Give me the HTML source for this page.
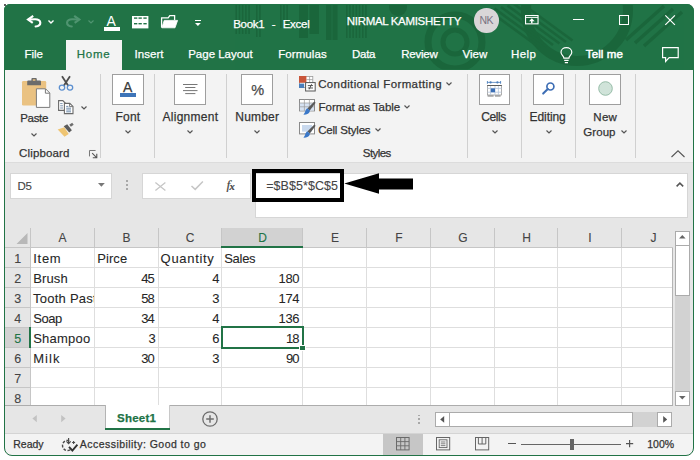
<!DOCTYPE html>
<html><head><meta charset="utf-8"><title>Book1 - Excel</title>
<style>
html,body{margin:0;padding:0;background:#fff;}
body{width:700px;height:460px;overflow:hidden;position:relative;font-family:"Liberation Sans",sans-serif;}
#win{position:absolute;left:4px;top:4px;width:690px;height:451.5px;border-radius:6px 7px 8px 8px;overflow:hidden;background:#e6e6e6;}
#win>*{margin-left:-4px;margin-top:-4px;}
#frame{position:absolute;left:4px;top:4px;width:690px;height:451.5px;box-sizing:border-box;border:1px solid #217346;border-radius:6px 7px 8px 8px;pointer-events:none;}
.t{position:absolute;white-space:nowrap;-webkit-text-stroke:0.25px currentColor;}
.b{position:absolute;}
svg{overflow:visible;}
</style></head><body>
<div id="win">
<div class="b" style="left:0px;top:0px;width:700px;height:69.5px;background:#217346;"></div>
<svg class="b" style="left:0;top:0" width="700" height="70" viewBox="0 0 700 70"><defs><clipPath id="tc"><rect x="0" y="4" width="700" height="65.5"/></clipPath></defs><g clip-path="url(#tc)" opacity="0.8"><rect x="299" y="4" width="9" height="34" fill="#1a6339"/><rect x="309.5" y="4" width="9.5" height="30" fill="#1a6339"/><rect x="326" y="4" width="5.5" height="36" fill="#1a6339"/><rect x="332.5" y="4" width="5" height="36" fill="#1a6339"/><rect x="235.5" y="4" width="1.5" height="30" fill="#1a6339"/><rect x="238.7" y="4" width="1.5" height="30" fill="#1a6339"/><rect x="241.9" y="4" width="1.5" height="30" fill="#1a6339"/><rect x="245.1" y="4" width="1.5" height="30" fill="#1a6339"/><rect x="248.3" y="4" width="1.5" height="30" fill="#1a6339"/><rect x="256.0" y="4" width="1.5" height="33" fill="#1a6339"/><rect x="259.2" y="4" width="1.5" height="33" fill="#1a6339"/><rect x="280.0" y="4" width="1.5" height="24" fill="#1a6339"/><rect x="283.2" y="4" width="1.5" height="24" fill="#1a6339"/><rect x="286.4" y="4" width="1.5" height="24" fill="#1a6339"/><rect x="346.0" y="4" width="1.5" height="34" fill="#1a6339"/><rect x="349.2" y="4" width="1.5" height="34" fill="#1a6339"/><rect x="352.4" y="4" width="1.5" height="34" fill="#1a6339"/><rect x="355.6" y="4" width="1.5" height="34" fill="#1a6339"/><rect x="358.8" y="4" width="1.5" height="34" fill="#1a6339"/><rect x="362.0" y="4" width="1.5" height="34" fill="#1a6339"/><rect x="365.2" y="4" width="1.5" height="34" fill="#1a6339"/><circle cx="398" cy="7" r="9" fill="#1a6339"/><circle cx="455" cy="42" r="27" fill="none" stroke="#1a6339" stroke-width="7"/><circle cx="455" cy="42" r="12" fill="none" stroke="#1a6339" stroke-width="5"/><circle cx="577" cy="10" r="51" fill="none" stroke="#1a6339" stroke-width="10"/><line x1="488.0" y1="10.0" x2="540.0" y2="48.0" stroke="#1a6339" stroke-width="2.6"/><line x1="494.5" y1="8.5" x2="546.5" y2="46.5" stroke="#1a6339" stroke-width="2.6"/><line x1="501.0" y1="7.0" x2="553.0" y2="45.0" stroke="#1a6339" stroke-width="2.6"/><line x1="507.5" y1="5.5" x2="559.5" y2="43.5" stroke="#1a6339" stroke-width="2.6"/><line x1="514.0" y1="4.0" x2="566.0" y2="42.0" stroke="#1a6339" stroke-width="2.6"/><line x1="520.5" y1="2.5" x2="572.5" y2="40.5" stroke="#1a6339" stroke-width="2.6"/><line x1="626" y1="40" x2="664" y2="6" stroke="#1a6339" stroke-width="3.4"/><line x1="635" y1="43" x2="673" y2="9" stroke="#1a6339" stroke-width="3.4"/><line x1="644" y1="46" x2="682" y2="12" stroke="#1a6339" stroke-width="3.4"/></g></svg>
<div class="b" style="left:66px;top:40px;width:55.5px;height:30px;background:#f3f3f3;"></div>
<svg class="b" style="left:26.8px;top:15px;" width="14.4" height="12.6" viewBox="0 0 16 14"><path d="M6.9 1.1 L1.2 5.1 L6.4 8.8" fill="none" stroke="#fff" stroke-width="2.4" stroke-linejoin="miter"/><path d="M2 5 L8.6 4.7 C12.4 4.5 14.8 6.4 14.8 8.6 C14.8 11 12.6 12.5 9.6 12.8" fill="none" stroke="#fff" stroke-width="2.4" stroke-linecap="round"/></svg>
<svg class="b" style="left:65.6px;top:15px;" width="14.4" height="12.6" viewBox="0 0 16 14"><g transform="translate(16,0) scale(-1,1)"><path d="M6.9 1.1 L1.2 5.1 L6.4 8.8" fill="none" stroke="#4f9470" stroke-width="2.4" stroke-linejoin="miter"/><path d="M2 5 L8.6 4.7 C12.4 4.5 14.8 6.4 14.8 8.6 C14.8 11 12.6 12.5 9.6 12.8" fill="none" stroke="#4f9470" stroke-width="2.4" stroke-linecap="round"/></g></svg>
<svg class="b" style="left:48px;top:20px;" width="6" height="4" viewBox="0 0 6 4"><path d="M0.5 0.5 L3 3 L5.5 0.5" fill="none" stroke="#fff" stroke-width="1.4"/></svg>
<svg class="b" style="left:87.5px;top:20px;" width="6" height="4" viewBox="0 0 6 4"><path d="M0.5 0.5 L3 3 L5.5 0.5" fill="none" stroke="#4f9470" stroke-width="1.2"/></svg>
<div class="t" style="left:106.60px;top:12px;font-size:14px;line-height:18px;color:#fff;-webkit-text-stroke:0;">A</div>
<div class="b" style="left:103.5px;top:27px;width:16.7px;height:3.6px;background:#fff;"></div>
<svg class="b" style="left:132.3px;top:16px;" width="17" height="13" viewBox="0 0 17 13"><rect x="0" y="0" width="16.4" height="12.4" fill="#fff"/><rect x="2" y="1.4000000000000001" width="3.3" height="1.4" fill="#217346"/><rect x="6.5" y="1.4000000000000001" width="3.3" height="1.4" fill="#217346"/><rect x="11.4" y="1.4000000000000001" width="3.3" height="1.4" fill="#217346"/><rect x="2" y="7.0" width="3.3" height="1.4" fill="#217346"/><rect x="6.5" y="7.0" width="3.3" height="1.4" fill="#217346"/><rect x="11.4" y="7.0" width="3.3" height="1.4" fill="#217346"/></svg>
<svg class="b" style="left:161.3px;top:15px;" width="17" height="13" viewBox="0 0 17 13"><path d="M0.6 12.6 V2.9 H7.2 L8.8 0.6 H13.6 V5" fill="none" stroke="#fff" stroke-width="1.3"/><path d="M0.8 12.8 L3.2 5.4 H16.6 L14 12.8 Z" fill="#fff" stroke="#fff" stroke-width="0.8" stroke-linejoin="round"/></svg>
<div class="b" style="left:195.4px;top:19.8px;width:5.8px;height:1.3px;background:#fff;"></div>
<svg class="b" style="left:195.4px;top:22.6px;" width="6" height="3.2" viewBox="0 0 6 3.2"><path d="M0 0 H5.8 L2.9 3.1 Z" fill="#fff"/></svg>
<div class="t" style="left:233.20px;top:17px;font-size:11.5px;line-height:14px;color:#fff;letter-spacing:-0.287px;word-spacing:4.50px;">Book1 - Excel</div>
<div class="t" style="left:346.80px;top:14px;font-size:11.5px;line-height:14px;color:#fff;letter-spacing:-0.325px;">NIRMAL KAMISHETTY</div>
<div class="b" style="left:474px;top:8px;width:24.5px;height:24.5px;background:#d9d6d8;border-radius:50%;"></div>
<div class="t" style="left:479.40px;top:13px;font-size:10.5px;line-height:14px;color:#7a7282;letter-spacing:-0.387px;-webkit-text-stroke:0;">NK</div>
<svg class="b" style="left:525.2px;top:15.4px;" width="13.6" height="9.4" viewBox="0 0 13.6 9.4"><rect x="0.55" y="0.55" width="12.5" height="8.3" fill="none" stroke="#fff" stroke-width="1.1"/><line x1="0.5" y1="2.5" x2="13" y2="2.5" stroke="#fff" stroke-width="0.9"/><path d="M6.8 3.3 L9.6 6.2 H4 Z" fill="#fff"/><path d="M6.8 5.5 V8.3" stroke="#fff" stroke-width="1.5"/></svg>
<div class="b" style="left:573px;top:19px;width:10.6px;height:1.2px;background:#fff;"></div>
<div class="b" style="left:619px;top:15px;width:10px;height:10px;border:1.2px solid #fff;box-sizing:border-box;"></div>
<svg class="b" style="left:665px;top:15px;" width="10" height="10" viewBox="0 0 10 10"><path d="M0.3 0.3 L9.9 9.9 M9.9 0.3 L0.3 9.9" stroke="#fff" stroke-width="1.2" fill="none"/></svg>
<div class="t" style="left:24.50px;top:47px;font-size:11.5px;line-height:14px;color:#fff;letter-spacing:-0.010px;">File</div>
<div class="t" style="left:76.70px;top:47px;font-size:11.5px;line-height:14px;color:#217346;letter-spacing:0.775px;">Home</div>
<div class="t" style="left:134.50px;top:47px;font-size:11.5px;line-height:14px;color:#fff;letter-spacing:0.048px;">Insert</div>
<div class="t" style="left:188.20px;top:47px;font-size:11.5px;line-height:14px;color:#fff;letter-spacing:-0.008px;">Page Layout</div>
<div class="t" style="left:278.20px;top:47px;font-size:11.5px;line-height:14px;color:#fff;letter-spacing:0.082px;">Formulas</div>
<div class="t" style="left:352.00px;top:47px;font-size:11.5px;line-height:14px;color:#fff;letter-spacing:-0.263px;">Data</div>
<div class="t" style="left:401.20px;top:47px;font-size:11.5px;line-height:14px;color:#fff;letter-spacing:-0.241px;">Review</div>
<div class="t" style="left:462.60px;top:47px;font-size:11.5px;line-height:14px;color:#fff;letter-spacing:-0.006px;">View</div>
<div class="t" style="left:511.00px;top:47px;font-size:11.5px;line-height:14px;color:#fff;letter-spacing:0.450px;">Help</div>
<div class="t" style="left:585.80px;top:47px;font-size:11.5px;line-height:14px;color:#fff;letter-spacing:0.096px;-webkit-text-stroke:0.5px #fff;">Tell me</div>
<svg class="b" style="left:559.5px;top:46.5px;" width="13" height="17" viewBox="0 0 13 17"><path d="M3.9 11.2 C3.9 9.2 1 8 1 5.2 C1 2.6 3.4 0.7 6.4 0.7 C9.4 0.7 11.8 2.6 11.8 5.2 C11.8 8 8.9 9.2 8.9 11.2 Z" fill="none" stroke="#fff" stroke-width="1.2"/><path d="M4.2 13.4 H8.6 M4.8 15.6 H8" stroke="#fff" stroke-width="1.2"/></svg>
<svg class="b" style="left:661.6px;top:46.5px;" width="17" height="15.5" viewBox="0 0 17 15.5"><path d="M0.6 0.6 H16.2 V10.6 H7.2 L3.6 14.4 V10.6 H0.6 Z" fill="none" stroke="#fff" stroke-width="1.2" stroke-linejoin="miter"/></svg>
<div class="b" style="left:0px;top:69.5px;width:700px;height:92px;background:#f3f3f3;"></div>
<div class="b" style="left:100.2px;top:74px;width:1px;height:83.5px;background:#d0d0d0;"></div>
<div class="b" style="left:153.8px;top:74px;width:1px;height:83.5px;background:#d0d0d0;"></div>
<div class="b" style="left:226.4px;top:74px;width:1px;height:83.5px;background:#d0d0d0;"></div>
<div class="b" style="left:287.4px;top:74px;width:1px;height:83.5px;background:#d0d0d0;"></div>
<div class="b" style="left:466.8px;top:74px;width:1px;height:83.5px;background:#d0d0d0;"></div>
<div class="b" style="left:521px;top:74px;width:1px;height:83.5px;background:#d0d0d0;"></div>
<div class="b" style="left:574.8px;top:74px;width:1px;height:83.5px;background:#d0d0d0;"></div>
<div class="b" style="left:635px;top:74px;width:1px;height:83.5px;background:#d0d0d0;"></div>
<svg class="b" style="left:21.8px;top:78px;" width="28.5" height="30" viewBox="0 0 28.5 30"><rect x="0" y="3" width="24.2" height="24.5" rx="1.2" fill="#eac282"/><path d="M5.2 7.2 V3.6 Q5.2 2.6 6.2 2.6 H9.4 V1 Q9.4 0 10.4 0 H13.8 Q14.8 0 14.8 1 V2.6 H18 Q19 2.6 19 3.6 V7.2 Z" fill="#6b6b6b"/><rect x="10.8" y="1.3" width="2.6" height="1.5" fill="#eac282"/><path d="M14.4 10.8 H23.6 L27.8 15 V29.4 H14.4 Z" fill="#fff" stroke="#7a7a7a" stroke-width="1"/><path d="M23.4 11 V15.2 H27.6" fill="none" stroke="#7a7a7a" stroke-width="1"/></svg>
<div class="t" style="left:20.30px;top:111px;font-size:11.5px;line-height:14px;color:#333;letter-spacing:-0.351px;">Paste</div>
<svg class="b" style="left:31.2px;top:132.6px;" width="6" height="4" viewBox="0 0 6 4"><path d="M0.5 0.5 L3 3 L5.5 0.5" fill="none" stroke="#555" stroke-width="1.2"/></svg>
<svg class="b" style="left:59px;top:76.3px;" width="14" height="14.6" viewBox="0 0 14 14.6"><path d="M3 0.2 L9.4 10 M11 0.2 L4.6 10" stroke="#4d4d4d" stroke-width="1.8" fill="none"/><ellipse cx="3" cy="11.6" rx="2.7" ry="2.5" fill="none" stroke="#5b8fd0" stroke-width="1.3"/><ellipse cx="11" cy="11.6" rx="2.7" ry="2.5" fill="none" stroke="#5b8fd0" stroke-width="1.3"/></svg>
<svg class="b" style="left:57.8px;top:100px;" width="15.4" height="14" viewBox="0 0 15.4 14"><path d="M0.6 0.6 H4.8 L7.2 3 V10.4 H0.6 Z" fill="#fff" stroke="#6a6a6a" stroke-width="1.1"/><path d="M2.2 3.6 H4.6 M2.2 5.8 H5 M2.2 8 H5" stroke="#6d87a6" stroke-width="0.9"/><path d="M6.4 3.4 H11.8 L15 6.4 V13.6 H6.4 Z" fill="#fff" stroke="#6a6a6a" stroke-width="1.1"/><path d="M11.6 3.6 V6.6 H14.8" fill="none" stroke="#6a6a6a" stroke-width="0.9"/><path d="M8.2 6.4 H10.4 M8.2 8.2 H13 M8.2 10 H13 M8.2 11.8 H13" stroke="#5f7fa3" stroke-width="0.9"/></svg>
<svg class="b" style="left:81px;top:105.5px;" width="6" height="4" viewBox="0 0 6 4"><path d="M0.5 0.5 L3 3 L5.5 0.5" fill="none" stroke="#555" stroke-width="1.2"/></svg>
<svg class="b" style="left:58.3px;top:122.8px;" width="16" height="14" viewBox="0 0 16 14"><path d="M-0.3 6.4 L6.3 4.2 L10.7 11 L6.5 13.8 Z" fill="#efc573"/><path d="M5.7 3.2 L9.2 1.2 L13.9 7.2 L11.2 9.4 Z" fill="#5c5c5c"/><path d="M11.2 1.7 L14.2 -0.3 L15.7 1.7 L12.9 3.7 Z" fill="#6e6e6e"/></svg>
<div class="t" style="left:19.00px;top:146px;font-size:11.5px;line-height:14px;color:#333;letter-spacing:0.160px;">Clipboard</div>
<svg class="b" style="left:88.6px;top:149.6px;" width="8.4" height="8.4" viewBox="0 0 8.4 8.4"><path d="M0.5 6.4 V0.5 H6.6" fill="none" stroke="#777" stroke-width="1"/><path d="M3.2 3.2 L7.6 7.6 M7.8 3.8 V7.8 H3.8" fill="none" stroke="#555" stroke-width="1.1"/></svg>
<div class="b" style="left:112px;top:74px;width:31.8px;height:30.6px;background:#fff;border:1px solid #9e9e9e;box-sizing:border-box;"></div>
<div class="t" style="left:115.60px;top:109px;font-size:12px;line-height:16px;color:#333;letter-spacing:0.197px;">Font</div>
<svg class="b" style="left:125.2px;top:130.4px;" width="6" height="4" viewBox="0 0 6 4"><path d="M0.5 0.5 L3 3 L5.5 0.5" fill="none" stroke="#555" stroke-width="1.2"/></svg>
<div class="t" style="left:123.00px;top:78px;font-size:14px;line-height:18px;color:#3a3a3a;">A</div>
<div class="b" style="left:120px;top:93px;width:16px;height:3.6px;background:#3d74b8;"></div>
<div class="b" style="left:174.2px;top:74px;width:31.8px;height:30.6px;background:#fff;border:1px solid #9e9e9e;box-sizing:border-box;"></div>
<div class="t" style="left:162.60px;top:109px;font-size:12px;line-height:16px;color:#333;letter-spacing:0.255px;">Alignment</div>
<svg class="b" style="left:187.4px;top:130.4px;" width="6" height="4" viewBox="0 0 6 4"><path d="M0.5 0.5 L3 3 L5.5 0.5" fill="none" stroke="#555" stroke-width="1.2"/></svg>
<svg class="b" style="left:183px;top:83.8px;" width="15" height="10.5" viewBox="0 0 15 10.5"><path d="M0 0.5 H14.5 M2.2 3.5 H12.4 M0 6.6 H14.5 M2.2 9.6 H12.4" stroke="#777" stroke-width="1" fill="none"/></svg>
<div class="b" style="left:241px;top:74px;width:31.8px;height:30.6px;background:#fff;border:1px solid #9e9e9e;box-sizing:border-box;"></div>
<div class="t" style="left:235.30px;top:109px;font-size:12px;line-height:16px;color:#333;letter-spacing:0.185px;">Number</div>
<svg class="b" style="left:254px;top:130.4px;" width="6" height="4" viewBox="0 0 6 4"><path d="M0.5 0.5 L3 3 L5.5 0.5" fill="none" stroke="#555" stroke-width="1.2"/></svg>
<div class="t" style="left:251.30px;top:81px;font-size:14.5px;line-height:18px;color:#4a4a4a;">%</div>
<div class="b" style="left:478.7px;top:74px;width:31.8px;height:30.6px;background:#fff;border:1px solid #9e9e9e;box-sizing:border-box;"></div>
<div class="t" style="left:481.30px;top:109px;font-size:12px;line-height:16px;color:#333;letter-spacing:-0.418px;">Cells</div>
<svg class="b" style="left:492.2px;top:130.4px;" width="6" height="4" viewBox="0 0 6 4"><path d="M0.5 0.5 L3 3 L5.5 0.5" fill="none" stroke="#555" stroke-width="1.2"/></svg>
<svg class="b" style="left:486.6px;top:80.8px;" width="15" height="17" viewBox="0 0 15 17"><path d="M0.4 1.4 H13.6" stroke="#4a7ebb" stroke-width="0.8" fill="none"/><path d="M0.4 0 V2.8 M13.6 0 V2.8" stroke="#4a7ebb" stroke-width="0.9" fill="none"/><circle cx="3.6" cy="1.4" r="1.1" fill="#4a7ebb"/><circle cx="10.4" cy="1.4" r="1.1" fill="#4a7ebb"/><rect x="0.5" y="4.6" width="14" height="9.4" fill="#fff" stroke="#9a9a9a" stroke-width="0.8"/><path d="M0.5 7.4 H14.5 M0.5 11.2 H14.5 M3.6 4.6 V14 M8 4.6 V14 M11.4 4.6 V14" stroke="#b4c4da" stroke-width="0.8"/><path d="M0.2 4.5 H14.8" stroke="#5a5a5a" stroke-width="1.2"/><rect x="3.8" y="7.4" width="4.2" height="3.8" fill="#3b6fb6"/><path d="M0.6 15 H6.6 M8 15 H13.6" stroke="#6a6a6a" stroke-width="0.9"/></svg>
<div class="b" style="left:532.5px;top:74px;width:31.8px;height:30.6px;background:#fff;border:1px solid #9e9e9e;box-sizing:border-box;"></div>
<div class="t" style="left:529.60px;top:109px;font-size:12px;line-height:16px;color:#333;letter-spacing:-0.082px;">Editing</div>
<svg class="b" style="left:545.6px;top:130.4px;" width="6" height="4" viewBox="0 0 6 4"><path d="M0.5 0.5 L3 3 L5.5 0.5" fill="none" stroke="#555" stroke-width="1.2"/></svg>
<svg class="b" style="left:541.5px;top:82px;" width="14" height="14" viewBox="0 0 14 14"><circle cx="8.4" cy="4.5" r="3.5" fill="none" stroke="#3f6fb5" stroke-width="1.7"/><path d="M5.8 7.1 L1.2 11.6" stroke="#3f6fb5" stroke-width="2.1" stroke-linecap="round"/></svg>
<div class="b" style="left:589.2px;top:74px;width:31.8px;height:30.6px;background:#fff;border:1px solid #9e9e9e;box-sizing:border-box;"></div>
<svg class="b" style="left:597.5px;top:81.2px;" width="15" height="15" viewBox="0 0 15 15"><circle cx="7.5" cy="7.5" r="6.8" fill="#d0e3d9" stroke="#96bda8" stroke-width="1"/></svg>
<div class="t" style="left:593.30px;top:110px;font-size:11.5px;line-height:14px;color:#333;letter-spacing:0.297px;">New</div>
<div class="t" style="left:583.30px;top:125px;font-size:11.5px;line-height:14px;color:#333;letter-spacing:0.060px;">Group</div>
<svg class="b" style="left:620.6px;top:130.4px;" width="6" height="4" viewBox="0 0 6 4"><path d="M0.5 0.5 L3 3 L5.5 0.5" fill="none" stroke="#555" stroke-width="1.2"/></svg>
<svg class="b" style="left:670.5px;top:150px;" width="14" height="8" viewBox="0 0 14 8"><path d="M0.5 7 L7 0.8 L13.5 7" fill="none" stroke="#555" stroke-width="1.1"/></svg>
<svg class="b" style="left:299px;top:76.2px;" width="16.8" height="15.6" viewBox="0 0 16.8 15.6"><rect x="0.4" y="0.4" width="13.4" height="11" fill="#fff" stroke="#9a9a9a" stroke-width="0.8"/><path d="M7.4 3.6 H13.8 M10.6 0.4 V7" stroke="#9a9a9a" stroke-width="0.7"/><rect x="0" y="0" width="7.4" height="6.8" fill="#c9553a"/><rect x="0" y="7.6" width="5.2" height="4.4" fill="#4a7ebb"/><rect x="6.6" y="6.6" width="9.6" height="8.4" fill="#fff" stroke="#555" stroke-width="1"/><path d="M8.8 9.6 H14 M8.8 12 H14 M12.6 8.2 L10.2 13.4" stroke="#444" stroke-width="0.9" fill="none"/></svg>
<svg class="b" style="left:299px;top:99px;" width="16.8" height="16" viewBox="0 0 16.8 16"><rect x="0.5" y="0.5" width="15" height="11.4" fill="#fff" stroke="#8a8a8a" stroke-width="1"/><rect x="0.9" y="4" width="14" height="7.6" fill="#d6e2f2"/><path d="M0.5 4 H15.5 M0.5 7.8 H15.5 M5.4 0.5 V11.9 M10.4 0.5 V11.9" stroke="#9a9a9a" stroke-width="0.7"/><path d="M15.4 2.4 L16.6 3.8 L10.8 11.6 L8.4 9.6 Z" fill="#5a5a5a"/><path d="M8.2 9.2 L11 11.6 C10.6 14.6 8 16.2 4.2 15.6 C6.4 14.2 6 10.8 8.2 9.2 Z" fill="#3b78c8"/></svg>
<svg class="b" style="left:299px;top:122px;" width="16.8" height="16" viewBox="0 0 16.8 16"><rect x="0.5" y="0.5" width="15" height="11.4" fill="#fff" stroke="#8a8a8a" stroke-width="1"/><rect x="3" y="3" width="10" height="6.6" fill="#c9d9ee"/><path d="M15.4 2.4 L16.6 3.8 L10.8 11.6 L8.4 9.6 Z" fill="#5a5a5a"/><path d="M8.2 9.2 L11 11.6 C10.6 14.6 8 16.2 4.2 15.6 C6.4 14.2 6 10.8 8.2 9.2 Z" fill="#3b78c8"/></svg>
<div class="t" style="left:318.20px;top:77px;font-size:11.5px;line-height:14px;color:#333;letter-spacing:0.367px;">Conditional Formatting</div>
<svg class="b" style="left:446px;top:82.4px;" width="6" height="4" viewBox="0 0 6 4"><path d="M0.5 0.5 L3 3 L5.5 0.5" fill="none" stroke="#555" stroke-width="1.2"/></svg>
<div class="t" style="left:318.60px;top:100px;font-size:11.5px;line-height:14px;color:#333;letter-spacing:-0.045px;">Format as Table</div>
<svg class="b" style="left:404px;top:105.4px;" width="6" height="4" viewBox="0 0 6 4"><path d="M0.5 0.5 L3 3 L5.5 0.5" fill="none" stroke="#555" stroke-width="1.2"/></svg>
<div class="t" style="left:318.20px;top:123px;font-size:11.5px;line-height:14px;color:#333;letter-spacing:-0.192px;">Cell Styles</div>
<svg class="b" style="left:375px;top:128.4px;" width="6" height="4" viewBox="0 0 6 4"><path d="M0.5 0.5 L3 3 L5.5 0.5" fill="none" stroke="#555" stroke-width="1.2"/></svg>
<div class="t" style="left:362.80px;top:146px;font-size:11.5px;line-height:14px;color:#333;letter-spacing:-0.583px;">Styles</div>
<div class="b" style="left:0px;top:161.5px;width:700px;height:272px;background:#e6e6e6;"></div>
<div class="b" style="left:0px;top:161.5px;width:700px;height:1px;background:#dcdcdc;"></div>
<div class="b" style="left:10px;top:172.5px;width:102px;height:26px;background:#fff;border:1px solid #d6d6d6;box-sizing:border-box;"></div>
<div class="t" style="left:17.40px;top:179px;font-size:11.5px;line-height:14px;color:#444;letter-spacing:-0.200px;-webkit-text-stroke:0.1px;">D5</div>
<svg class="b" style="left:97.5px;top:183px;" width="7" height="4" viewBox="0 0 7 4"><path d="M0 0 H6.8 L3.4 3.8 Z" fill="#777"/></svg>
<div class="b" style="left:126px;top:180.2px;width:1.6px;height:1.7px;background:#a8a8a8;"></div>
<div class="b" style="left:126px;top:184.2px;width:1.6px;height:1.7px;background:#a8a8a8;"></div>
<div class="b" style="left:126px;top:188.2px;width:1.6px;height:1.7px;background:#a8a8a8;"></div>
<div class="b" style="left:141.6px;top:172.5px;width:109.2px;height:26px;background:#fff;border:1px solid #d6d6d6;box-sizing:border-box;"></div>
<svg class="b" style="left:155px;top:181.5px;" width="10.8" height="8.8" viewBox="0 0 10.8 8.8"><path d="M0.4 0.4 L10.4 8.4 M10.4 0.4 L0.4 8.4" stroke="#c6c6c6" stroke-width="1.3" fill="none"/></svg>
<svg class="b" style="left:191px;top:181.4px;" width="12.4" height="9" viewBox="0 0 12.4 9"><path d="M0.5 5 L4.2 8.4 L11.9 0.5" stroke="#c6c6c6" stroke-width="1.5" fill="none"/></svg>
<div class="t" style="left:226.4px;top:177px;font-family:'Liberation Serif',serif;font-style:italic;font-size:13.5px;line-height:16px;color:#444;-webkit-text-stroke:0.2px #444;">f<span style="font-size:10.5px;font-weight:bold;position:relative;top:1.2px;left:-0.6px;letter-spacing:0;">x</span></div>
<div class="b" style="left:254.5px;top:172.5px;width:433.5px;height:45.5px;background:#fff;border:1px solid #d6d6d6;box-sizing:border-box;"></div>
<div class="t" style="left:266.20px;top:178px;font-size:12.5px;line-height:16px;color:#444;letter-spacing:0.062px;-webkit-text-stroke:0.1px;">=$B$5*$C$5</div>
<div class="b" style="left:252.3px;top:169.2px;width:91.4px;height:33px;border:4.3px solid #000;box-sizing:border-box;"></div>
<svg class="b" style="left:344px;top:172px;" width="70" height="24" viewBox="0 0 70 24"><path d="M0.3 11.4 L35 1.2 L35 6.6 L69 6.6 L69 17.4 L35 17.4 L35 21.8 Z" fill="#000"/></svg>
<svg class="b" style="left:675.8px;top:182.2px;" width="7.8" height="5" viewBox="0 0 7.8 5"><path d="M0.6 4.4 L3.9 1.1 L7.2 4.4" fill="none" stroke="#555" stroke-width="1.5"/></svg>
<div class="b" style="left:31px;top:248px;width:641.5px;height:157.5px;background:#fff;"></div>
<div class="b" style="left:222px;top:228px;width:80px;height:19px;background:#d2d2d2;"></div>
<div class="b" style="left:5px;top:328px;width:25px;height:19px;background:#d2d2d2;"></div>
<div class="b" style="left:30px;top:228px;width:1px;height:19.5px;background:#c6c6c6;"></div>
<div class="b" style="left:94px;top:228px;width:1px;height:19.5px;background:#c6c6c6;"></div>
<div class="b" style="left:158px;top:228px;width:1px;height:19.5px;background:#c6c6c6;"></div>
<div class="b" style="left:221px;top:228px;width:1px;height:19.5px;background:#c6c6c6;"></div>
<div class="b" style="left:302px;top:228px;width:1px;height:19.5px;background:#c6c6c6;"></div>
<div class="b" style="left:366px;top:228px;width:1px;height:19.5px;background:#c6c6c6;"></div>
<div class="b" style="left:430px;top:228px;width:1px;height:19.5px;background:#c6c6c6;"></div>
<div class="b" style="left:494px;top:228px;width:1px;height:19.5px;background:#c6c6c6;"></div>
<div class="b" style="left:557px;top:228px;width:1px;height:19.5px;background:#c6c6c6;"></div>
<div class="b" style="left:621px;top:228px;width:1px;height:19.5px;background:#c6c6c6;"></div>
<div class="b" style="left:5px;top:247px;width:667.5px;height:1px;background:#c6c6c6;"></div>
<div class="b" style="left:221px;top:246px;width:82px;height:2px;background:#217346;"></div>
<div class="b" style="left:5px;top:267.0px;width:25px;height:1px;background:#c6c6c6;"></div>
<div class="b" style="left:31px;top:267.0px;width:641px;height:1px;background:#dedede;"></div>
<div class="b" style="left:5px;top:287.0px;width:25px;height:1px;background:#c6c6c6;"></div>
<div class="b" style="left:31px;top:287.0px;width:641px;height:1px;background:#dedede;"></div>
<div class="b" style="left:5px;top:307.0px;width:25px;height:1px;background:#c6c6c6;"></div>
<div class="b" style="left:31px;top:307.0px;width:641px;height:1px;background:#dedede;"></div>
<div class="b" style="left:5px;top:327.0px;width:25px;height:1px;background:#c6c6c6;"></div>
<div class="b" style="left:31px;top:327.0px;width:641px;height:1px;background:#dedede;"></div>
<div class="b" style="left:5px;top:347.0px;width:25px;height:1px;background:#c6c6c6;"></div>
<div class="b" style="left:31px;top:347.0px;width:641px;height:1px;background:#dedede;"></div>
<div class="b" style="left:5px;top:367.0px;width:25px;height:1px;background:#c6c6c6;"></div>
<div class="b" style="left:31px;top:367.0px;width:641px;height:1px;background:#dedede;"></div>
<div class="b" style="left:5px;top:387.0px;width:25px;height:1px;background:#c6c6c6;"></div>
<div class="b" style="left:31px;top:387.0px;width:641px;height:1px;background:#dedede;"></div>
<div class="b" style="left:94px;top:248px;width:1px;height:157px;background:#dedede;"></div>
<div class="b" style="left:158px;top:248px;width:1px;height:157px;background:#dedede;"></div>
<div class="b" style="left:221px;top:248px;width:1px;height:157px;background:#dedede;"></div>
<div class="b" style="left:302px;top:248px;width:1px;height:157px;background:#dedede;"></div>
<div class="b" style="left:366px;top:248px;width:1px;height:157px;background:#dedede;"></div>
<div class="b" style="left:430px;top:248px;width:1px;height:157px;background:#dedede;"></div>
<div class="b" style="left:494px;top:248px;width:1px;height:157px;background:#dedede;"></div>
<div class="b" style="left:557px;top:248px;width:1px;height:157px;background:#dedede;"></div>
<div class="b" style="left:621px;top:248px;width:1px;height:157px;background:#dedede;"></div>
<div class="b" style="left:30px;top:248px;width:1px;height:157.5px;background:#c6c6c6;"></div>
<div class="b" style="left:29px;top:327px;width:2px;height:21px;background:#217346;"></div>
<div class="b" style="left:672px;top:248px;width:1px;height:158px;background:#b4b4b4;"></div>
<div class="b" style="left:5px;top:405px;width:668px;height:1px;background:#acacac;"></div>
<svg class="b" style="left:15.5px;top:233px;" width="12" height="11.5" viewBox="0 0 12 11.5"><path d="M11.5 0 V11 H0.5 Z" fill="#b8b8b8"/></svg>
<div class="t" style="left:58.50px;top:230px;font-size:12px;line-height:16px;color:#444;-webkit-text-stroke:0.1px;">A</div>
<div class="t" style="left:122.50px;top:230px;font-size:12px;line-height:16px;color:#444;-webkit-text-stroke:0.1px;">B</div>
<div class="t" style="left:185.87px;top:230px;font-size:12px;line-height:16px;color:#444;-webkit-text-stroke:0.1px;">C</div>
<div class="t" style="left:258.17px;top:230px;font-size:12px;line-height:16px;color:#217346;-webkit-text-stroke:0.1px;">D</div>
<div class="t" style="left:331.00px;top:230px;font-size:12px;line-height:16px;color:#444;-webkit-text-stroke:0.1px;">E</div>
<div class="t" style="left:395.34px;top:230px;font-size:12px;line-height:16px;color:#444;-webkit-text-stroke:0.1px;">F</div>
<div class="t" style="left:458.33px;top:230px;font-size:12px;line-height:16px;color:#444;-webkit-text-stroke:0.1px;">G</div>
<div class="t" style="left:522.17px;top:230px;font-size:12px;line-height:16px;color:#444;-webkit-text-stroke:0.1px;">H</div>
<div class="t" style="left:588.33px;top:230px;font-size:12px;line-height:16px;color:#444;-webkit-text-stroke:0.1px;">I</div>
<div class="t" style="left:650.50px;top:230px;font-size:12px;line-height:16px;color:#444;-webkit-text-stroke:0.1px;">J</div>
<div class="t" style="left:14.32px;top:251px;font-size:12.5px;line-height:16px;color:#444;-webkit-text-stroke:0.1px;">1</div>
<div class="t" style="left:14.32px;top:271px;font-size:12.5px;line-height:16px;color:#444;-webkit-text-stroke:0.1px;">2</div>
<div class="t" style="left:14.32px;top:291px;font-size:12.5px;line-height:16px;color:#444;-webkit-text-stroke:0.1px;">3</div>
<div class="t" style="left:14.32px;top:311px;font-size:12.5px;line-height:16px;color:#444;-webkit-text-stroke:0.1px;">4</div>
<div class="t" style="left:14.32px;top:331px;font-size:12.5px;line-height:16px;color:#217346;-webkit-text-stroke:0.1px;">5</div>
<div class="t" style="left:14.32px;top:351px;font-size:12.5px;line-height:16px;color:#444;-webkit-text-stroke:0.1px;">6</div>
<div class="t" style="left:14.32px;top:371px;font-size:12.5px;line-height:16px;color:#444;-webkit-text-stroke:0.1px;">7</div>
<div class="t" style="left:14.32px;top:391px;font-size:12.5px;line-height:16px;color:#444;-webkit-text-stroke:0.1px;">8</div>
<div class="t" style="left:33.20px;top:250px;font-size:13px;line-height:17px;color:#262626;letter-spacing:0.740px;-webkit-text-stroke:0.08px #262626;">Item</div>
<div class="t" style="left:97.20px;top:250px;font-size:13px;line-height:17px;color:#262626;letter-spacing:0.096px;-webkit-text-stroke:0.08px #262626;">Pirce</div>
<div class="t" style="left:160.60px;top:250px;font-size:13px;line-height:17px;color:#262626;letter-spacing:0.684px;-webkit-text-stroke:0.08px #262626;">Quantity</div>
<div class="t" style="left:224.20px;top:250px;font-size:13px;line-height:17px;color:#262626;letter-spacing:-0.280px;-webkit-text-stroke:0.08px #262626;">Sales</div>
<div class="t" style="left:33.20px;top:270px;font-size:13px;line-height:17px;color:#262626;letter-spacing:0.135px;-webkit-text-stroke:0.08px #262626;">Brush</div>
<div class="t" style="left:141.14px;top:270px;font-size:13px;line-height:17px;color:#262626;letter-spacing:-0.798px;-webkit-text-stroke:0.08px #262626;">45</div>
<div class="t" style="left:212.17px;top:270px;font-size:13px;line-height:17px;color:#262626;letter-spacing:-0.999px;-webkit-text-stroke:0.08px #262626;">4</div>
<div class="t" style="left:278.51px;top:270px;font-size:13px;line-height:17px;color:#262626;letter-spacing:-0.299px;-webkit-text-stroke:0.08px #262626;">180</div>
<div class="b" style="left:31px;top:288px;width:63px;height:19px;overflow:hidden;"><div class="t" style="left:2px;top:2.00px;font-size:13px;line-height:17px;color:#262626;letter-spacing:0.25px;-webkit-text-stroke:0.08px #262626;">Tooth Past</div></div>
<div class="t" style="left:141.14px;top:290px;font-size:13px;line-height:17px;color:#262626;letter-spacing:-0.798px;-webkit-text-stroke:0.08px #262626;">58</div>
<div class="t" style="left:212.17px;top:290px;font-size:13px;line-height:17px;color:#262626;letter-spacing:-0.999px;-webkit-text-stroke:0.08px #262626;">3</div>
<div class="t" style="left:278.51px;top:290px;font-size:13px;line-height:17px;color:#262626;letter-spacing:-0.299px;-webkit-text-stroke:0.08px #262626;">174</div>
<div class="t" style="left:33.20px;top:310px;font-size:13px;line-height:17px;color:#262626;letter-spacing:-0.453px;-webkit-text-stroke:0.08px #262626;">Soap</div>
<div class="t" style="left:141.14px;top:310px;font-size:13px;line-height:17px;color:#262626;letter-spacing:-0.798px;-webkit-text-stroke:0.08px #262626;">34</div>
<div class="t" style="left:212.17px;top:310px;font-size:13px;line-height:17px;color:#262626;letter-spacing:-0.999px;-webkit-text-stroke:0.08px #262626;">4</div>
<div class="t" style="left:278.51px;top:310px;font-size:13px;line-height:17px;color:#262626;letter-spacing:-0.299px;-webkit-text-stroke:0.08px #262626;">136</div>
<div class="t" style="left:33.20px;top:330px;font-size:13px;line-height:17px;color:#262626;letter-spacing:0.226px;-webkit-text-stroke:0.08px #262626;">Shampoo</div>
<div class="t" style="left:148.57px;top:330px;font-size:13px;line-height:17px;color:#262626;letter-spacing:-0.999px;-webkit-text-stroke:0.08px #262626;">3</div>
<div class="t" style="left:212.17px;top:330px;font-size:13px;line-height:17px;color:#262626;letter-spacing:-0.999px;-webkit-text-stroke:0.08px #262626;">6</div>
<div class="t" style="left:285.94px;top:330px;font-size:13px;line-height:17px;color:#262626;letter-spacing:-0.798px;-webkit-text-stroke:0.08px #262626;">18</div>
<div class="t" style="left:33.20px;top:350px;font-size:13px;line-height:17px;color:#262626;letter-spacing:1.098px;-webkit-text-stroke:0.08px #262626;">Milk</div>
<div class="t" style="left:141.14px;top:350px;font-size:13px;line-height:17px;color:#262626;letter-spacing:-0.798px;-webkit-text-stroke:0.08px #262626;">30</div>
<div class="t" style="left:212.17px;top:350px;font-size:13px;line-height:17px;color:#262626;letter-spacing:-0.999px;-webkit-text-stroke:0.08px #262626;">3</div>
<div class="t" style="left:285.94px;top:350px;font-size:13px;line-height:17px;color:#262626;letter-spacing:-0.798px;-webkit-text-stroke:0.08px #262626;">90</div>
<div class="b" style="left:220.8px;top:326.2px;width:83px;height:23.2px;border:2px solid #217346;box-sizing:border-box;"></div>
<div class="b" style="left:299.4px;top:344.6px;width:6.2px;height:6.2px;background:#217346;border:1px solid #fff;box-sizing:border-box;"></div>
<div class="b" style="left:675px;top:231px;width:14.6px;height:174.5px;background:#d2d2d2;"></div>
<div class="b" style="left:675px;top:230.6px;width:14.6px;height:15px;background:#fff;border:1px solid #ababab;box-sizing:border-box;"></div>
<svg class="b" style="left:679px;top:235.4px;" width="7" height="4" viewBox="0 0 7 4"><path d="M0 3.6 H6.6 L3.3 0 Z" fill="#666"/></svg>
<div class="b" style="left:675px;top:245px;width:14.6px;height:51.4px;background:#fff;border:1px solid #ababab;box-sizing:border-box;"></div>
<div class="b" style="left:675px;top:391px;width:14.6px;height:15px;background:#fff;border:1px solid #ababab;box-sizing:border-box;"></div>
<svg class="b" style="left:679px;top:396.4px;" width="7" height="4" viewBox="0 0 7 4"><path d="M0 0 H6.6 L3.3 3.6 Z" fill="#666"/></svg>
<div class="b" style="left:105px;top:405px;width:64.6px;height:25px;background:#fff;"></div>
<div class="b" style="left:105px;top:405px;width:1px;height:23px;background:#b4b4b4;"></div>
<div class="b" style="left:169px;top:405px;width:1px;height:23px;background:#c8c8c8;"></div>
<div class="b" style="left:105px;top:427.6px;width:64.6px;height:2.4px;background:#217346;"></div>
<div class="t" style="left:117.00px;top:411px;font-size:11.5px;line-height:14px;color:#217346;letter-spacing:0.258px;font-weight:bold;">Sheet1</div>
<svg class="b" style="left:31.6px;top:415px;" width="5" height="7.4" viewBox="0 0 5 7.4"><path d="M4.8 0 V7.2 L0.4 3.6 Z" fill="#c2c2c2"/></svg>
<svg class="b" style="left:60.8px;top:415px;" width="5" height="7.4" viewBox="0 0 5 7.4"><path d="M0.2 0 V7.2 L4.6 3.6 Z" fill="#c2c2c2"/></svg>
<svg class="b" style="left:202px;top:410.8px;" width="16" height="16" viewBox="0 0 16 16"><circle cx="8" cy="8" r="7.2" fill="none" stroke="#6e6e6e" stroke-width="1.3"/><path d="M4.2 8 H11.8 M8 4.2 V11.8" stroke="#6e6e6e" stroke-width="1.5"/></svg>
<div class="b" style="left:418.2px;top:414.6px;width:1.4px;height:1.6px;background:#a8a8a8;"></div>
<div class="b" style="left:418.2px;top:418.4px;width:1.4px;height:1.6px;background:#a8a8a8;"></div>
<div class="b" style="left:418.2px;top:422.2px;width:1.4px;height:1.6px;background:#a8a8a8;"></div>
<div class="b" style="left:435px;top:412px;width:237px;height:15px;background:#d2d2d2;"></div>
<div class="b" style="left:435px;top:412px;width:15px;height:15px;background:#fff;border:1px solid #ababab;box-sizing:border-box;"></div>
<svg class="b" style="left:440.2px;top:416px;" width="4.4" height="7" viewBox="0 0 4.4 7"><path d="M4.2 0 V6.8 L0.2 3.4 Z" fill="#555"/></svg>
<div class="b" style="left:449.4px;top:412px;width:184px;height:15px;background:#fff;border:1px solid #ababab;box-sizing:border-box;"></div>
<div class="b" style="left:656.6px;top:412px;width:15.6px;height:15px;background:#fff;border:1px solid #ababab;box-sizing:border-box;"></div>
<svg class="b" style="left:662.6px;top:416px;" width="4.4" height="7" viewBox="0 0 4.4 7"><path d="M0.2 0 V6.8 L4.2 3.4 Z" fill="#555"/></svg>
<div class="b" style="left:0px;top:433.5px;width:700px;height:23px;background:#f3f3f3;"></div>
<div class="b" style="left:0px;top:433px;width:700px;height:1px;background:#d4d4d4;"></div>
<div class="t" style="left:13.20px;top:437px;font-size:10.5px;line-height:14px;color:#333;letter-spacing:0.013px;">Ready</div>
<svg class="b" style="left:62px;top:437.5px;" width="16" height="14" viewBox="0 0 16 14"><path d="M7.2 2.6 A5.1 5.1 0 1 0 9.6 10.6" fill="none" stroke="#4a4a4a" stroke-width="1.4" stroke-dasharray="2.8 1.5"/><path d="M6.6 0 V5.4 M4.5 3.4 L6.6 5.6 L8.7 3.4" fill="none" stroke="#4a4a4a" stroke-width="1.2"/><path d="M11.6 3 V6 M10.1 4.5 H13.1" stroke="#4a4a4a" stroke-width="1.1"/><path d="M7 8.8 L10.4 12.6 L15.4 6.6" fill="none" stroke="#333" stroke-width="1.9"/></svg>
<div class="t" style="left:79.80px;top:437px;font-size:10.5px;line-height:14px;color:#333;letter-spacing:0.460px;">Accessibility: Good to go</div>
<div class="b" style="left:383.2px;top:433.5px;width:40px;height:22px;background:#c6c6c6;"></div>
<svg class="b" style="left:395.8px;top:437px;" width="13.6" height="13.4" viewBox="0 0 13.6 13.4"><rect x="0.5" y="0.5" width="12.6" height="12.4" fill="none" stroke="#6a6a6a" stroke-width="1"/><path d="M4.7 0.5 V12.9 M8.9 0.5 V12.9 M0.5 4.6 H13.1 M0.5 8.8 H13.1" stroke="#6a6a6a" stroke-width="0.9"/></svg>
<svg class="b" style="left:435.8px;top:437px;" width="14.4" height="13.4" viewBox="0 0 14.4 13.4"><rect x="0.5" y="0.5" width="13.2" height="12.4" fill="none" stroke="#666" stroke-width="1"/><rect x="3.2" y="2.8" width="7.8" height="7.8" fill="none" stroke="#666" stroke-width="0.9"/><path d="M4.8 5 H9.4 M4.8 6.8 H9.4 M4.8 8.6 H9.4" stroke="#666" stroke-width="0.8"/></svg>
<svg class="b" style="left:475.2px;top:437px;" width="14.4" height="13.4" viewBox="0 0 14.4 13.4"><rect x="0.5" y="0.5" width="13.2" height="12.4" fill="none" stroke="#666" stroke-width="1"/><path d="M3.4 0.5 V7 H10.8 V0.5 M7.1 0.5 V7" fill="none" stroke="#666" stroke-width="1"/></svg>
<div class="b" style="left:508px;top:442.8px;width:7.6px;height:1.2px;background:#555;"></div>
<div class="b" style="left:521px;top:443.6px;width:100px;height:1px;background:#666;"></div>
<div class="b" style="left:569.6px;top:438.6px;width:4.8px;height:11px;background:#666;"></div>
<svg class="b" style="left:626.2px;top:440px;" width="7.4" height="7.4" viewBox="0 0 7.4 7.4"><path d="M0 3.6 H7.2 M3.6 0 V7.2" stroke="#555" stroke-width="1.2"/></svg>
<div class="t" style="left:647.20px;top:437px;font-size:10.5px;line-height:14px;color:#333;letter-spacing:0.049px;">100%</div>
</div>
<div id="frame"></div>
<div class="b" style="left:4px;top:4px;width:2.4px;height:2.4px;background:#5e5e5e;"></div>
</body></html>
